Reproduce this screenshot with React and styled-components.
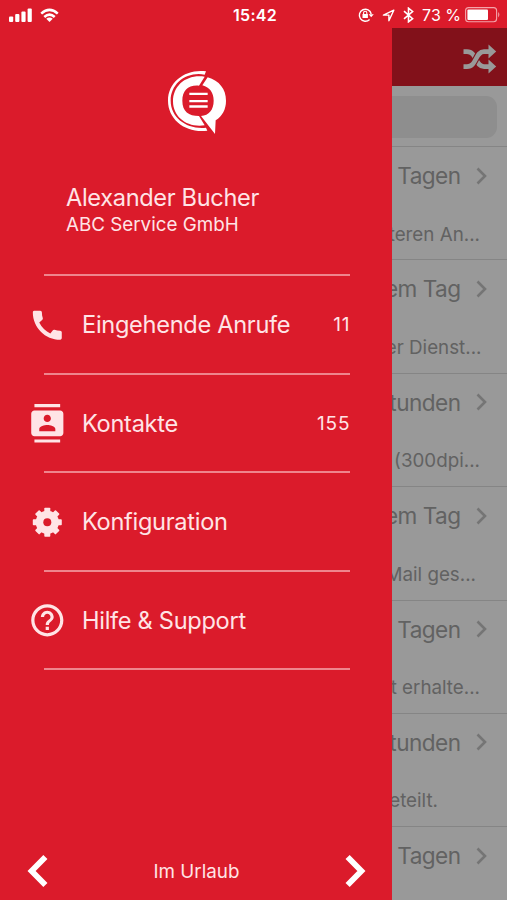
import styled, { createGlobalStyle } from 'styled-components'
import { MdCall, MdContacts, MdHelpOutline } from 'react-icons/md'

const colors = {
   Red: '#db1b2b',
   DarkRed: '#82111a',
   Pink: '#ffe4e6',
   Line: '#ef858d',
   Grey: '#999999',
   GreyLine: '#858585',
   Field: '#8e8e8e',
   GreyText: '#626262',
   Chevron: '#757575',
}

const GlobalStyle = createGlobalStyle`
   * {
      box-sizing: border-box;
   }

   body {
      margin: 0;
      font-family: Inter, 'Liberation Sans', sans-serif;
      background-color: ${colors.Red};
   }
`

const Screen = styled.div`
   width: 507px;
   height: 900px;
   display: flex;
   flex-direction: column;
   overflow: hidden;
   background-color: ${colors.Red};
`

const StatusBar = styled.header`
   height: 28px;
   flex: none;
   display: grid;
   grid-template-columns: 1fr auto 1fr;
   align-items: center;
   padding: 2px 6px 0 9px;
   color: #fff;
`

const StatusGroup = styled.div`
   display: flex;
   align-items: center;
   gap: ${(props) => props.$gap}px;
   justify-self: ${(props) => (props.$end ? 'end' : 'start')};

   svg {
      display: block;
      flex: none;
   }
`

const Clock = styled.span`
   font-size: 16px;
   font-weight: 600;
   letter-spacing: 0.25px;
`

const Percent = styled.span`
   font-size: 16px;
   white-space: nowrap;
   margin-right: -4px;
`

const Body = styled.div`
   flex: 1;
   min-height: 0;
   display: grid;
   grid-template-columns: 392px 1fr;
`

const Drawer = styled.nav`
   display: flex;
   flex-direction: column;
   background-color: ${colors.Red};
   color: ${colors.Pink};
`

const LogoRow = styled.div`
   height: 144px;
   padding: 32px 0 0 150px;
`

const Profile = styled.div`
   height: 102px;
   padding: 11px 0 0 66px;
   display: flex;
   flex-direction: column;
   white-space: nowrap;
`

const Name = styled.span`
   font-size: 23.6px;
   line-height: 30px;
   letter-spacing: -0.34px;
`

const Company = styled.span`
   font-size: 18.8px;
   line-height: 23px;
`

const Menu = styled.ul`
   list-style: none;
   margin: 0;
   padding: 0;
   flex: 1;
`

const Divider = styled.div`
   height: 2px;
   width: 306px;
   margin-left: 44px;
   background-color: ${colors.Line};
`

const MenuItem = styled.li`
   height: 96.6px;
   display: grid;
   grid-template-columns: 39px 1fr auto;
   align-items: center;
   column-gap: 15.5px;
   padding: 1px 42px 0 27.5px;
   font-size: 23.6px;
   letter-spacing: -0.3px;
   white-space: nowrap;

   svg {
      display: block;
   }
`

const Count = styled.span`
   font-size: 19px;
   letter-spacing: 0.9px;
   margin-right: -0.5px;
`

const DrawerFooter = styled.footer`
   height: 60px;
   display: flex;
   align-items: center;
   justify-content: space-between;
   padding: 2px 25px 0 26px;
   font-size: 18.8px;

   svg {
      display: block;
   }
`

const Content = styled.main`
   display: flex;
   flex-direction: column;
   overflow: hidden;
   background-color: ${colors.Grey};
   color: ${colors.GreyText};
`

const Toolbar = styled.div`
   height: 58px;
   flex: none;
   display: flex;
   justify-content: flex-end;
   align-items: center;
   padding: 4px 10px 0 0;
   background-color: ${colors.DarkRed};
`

const SearchBar = styled.div`
   height: 61px;
   flex: none;
   padding: 10px 10px 8px 0;
   border-bottom: 1px solid ${colors.GreyLine};
`

const SearchField = styled.div`
   height: 100%;
   border-radius: 0 11px 11px 0;
   background-color: ${colors.Field};
`

const CallRow = styled.article`
   height: 113.4px;
   flex: none;
   border-bottom: 1px solid ${colors.GreyLine};
   white-space: nowrap;
   overflow: hidden;
`

const CallTime = styled.div`
   height: 57px;
   display: flex;
   align-items: center;
   justify-content: flex-end;
   gap: 15.5px;
   padding-right: 20px;
   font-size: 22.6px;
   letter-spacing: -0.55px;

   svg {
      flex: none;
   }
`

const CallText = styled.div`
   height: 55px;
   display: flex;
   align-items: center;
   justify-content: flex-end;
   padding: 3px ${(props) => props.$end}px 0 0;
   font-size: 18.8px;
   margin-top: 1px;
`

const calls = [
   { time: 'Tagen', text: 'teren An...', end: 27 },
   { time: 'em Tag', text: 'er Dienst...', end: 25.5 },
   { time: 'tunden', text: '(300dpi...', end: 27 },
   { time: 'em Tag', text: 'Mail ges...', end: 31 },
   { time: 'Tagen', text: 't erhalte...', end: 27 },
   { time: 'tunden', text: 'eteilt.', end: 69 },
   { time: 'Tagen', text: '', end: 27 },
]

const menu = [
   { label: 'Eingehende Anrufe', icon: <MdCall size={38.6} />, count: 11 },
   { label: 'Kontakte', icon: <MdContacts size={38.6} />, count: 155 },
   { label: 'Konfiguration', icon: <GearIcon /> },
   { label: 'Hilfe & Support', icon: <MdHelpOutline size={38.6} /> },
]

function SignalIcon() {
   return (
      <svg width="24" height="15" viewBox="0 0 24 15" fill="currentColor">
         <rect x="0" y="8.5" width="4.2" height="5.5" rx="1" />
         <rect x="6.2" y="6" width="4.2" height="8" rx="1" />
         <rect x="12.4" y="3.5" width="4.2" height="10.5" rx="1" />
         <rect x="18.6" y="0.5" width="4.2" height="13.5" rx="1" />
      </svg>
   )
}

function WifiIcon() {
   return (
      <svg width="19" height="14.5" viewBox="0 0 20 15" fill="none" stroke="currentColor" strokeWidth="2.7">
         <path d="M1.3 5.8Q10 -2 18.7 5.8" />
         <path d="M4.5 9.3Q10 4.4 15.5 9.3" />
         <path d="M6.6 11.2Q10 8.4 13.4 11.2L10 14.6Z" fill="currentColor" stroke="none" />
      </svg>
   )
}

function RotationLockIcon() {
   return (
      <svg width="16" height="16" viewBox="0 0 16 16" fill="none" stroke="currentColor" strokeWidth="1.4">
         <path d="M11.6 12.5A6 6 0 1 1 13.2 7" />
         <path d="M10.6 7.2H15.8L13.2 10.3Z" fill="currentColor" stroke="none" />
         <rect x="4.5" y="7" width="5.4" height="4" fill="currentColor" stroke="none" />
         <path d="M5.6 7.2V5.8a1.6 1.6 0 0 1 3.2 0V7.2" strokeWidth="1.1" />
      </svg>
   )
}

function LocationIcon() {
   return (
      <svg width="13" height="13" viewBox="0 0 13 13" fill="none" stroke="currentColor" strokeWidth="1.4">
         <path d="M11.8 1.2L1.4 6.1H6.9V11.7Z" strokeLinejoin="round" />
      </svg>
   )
}

function BluetoothIcon() {
   return (
      <svg width="11" height="16" viewBox="0 0 11 16" fill="none" stroke="currentColor" strokeWidth="1.6">
         <path d="M1 4.2L9.6 11.6L5.5 14.8V1.2L9.6 4.5L1 11.8" />
      </svg>
   )
}

function BatteryIcon() {
   return (
      <svg width="36" height="16" viewBox="0 0 36 16">
         <rect x="0.6" y="0.6" width="31" height="14.2" rx="3" fill="none" stroke="#f4a4aa" strokeWidth="1.1" />
         <rect x="2.4" y="2.4" width="20.6" height="10.6" rx="1" fill="#fff" />
         <path d="M33.2 5Q35.6 7.7 33.2 10.4Z" fill="#f4a4aa" />
      </svg>
   )
}

function Logo() {
   return (
      <svg width="100" height="80" viewBox="0 0 300 240" fill="#fff">
         <path d="M168 34C108 26 54 64 54 122C54 180 108 220 172 212L168 203C112 209 62 174 62 122C62 70 110 34 164 44Z" />
         <path d="M164 50C110 42 69 76 69 124C69 172 112 204 164 196L147 168C116 168 97 154 97 122C97 92 115 74 147 77Z" />
         <path d="M173 52C208 62 228 88 228 122C228 148 217 168 197 181L195 222L153 168C177 166 191 149 191 122C191 99 180 82 157 76Z" />
         <path d="M118 98H173V105H118ZM118 120H173V127H118ZM118 136H173V143H118Z" />
      </svg>
   )
}

function GearIcon() {
   return (
      <svg width="38.6" height="38.6" viewBox="-19.3 -19.3 38.6 38.6" fill="currentColor">
         {[0, 45, 90, 135].map((angle) => (
            <rect key={angle} x="-3" y="-14.5" width="6" height="29" rx="0.8" transform={`rotate(${angle})`} />
         ))}
         <circle r="11.6" />
         <circle r="4" fill={colors.Red} />
      </svg>
   )
}

function ShuffleIcon() {
   return (
      <svg width="34" height="30" viewBox="0 0 34 30">
         <g fill="none" stroke="#999" strokeWidth="4.6">
            <path d="M0.5 7.6H4C14 7.6 12 22.6 21 22.6H27" />
            <path d="M0.5 22.6H4C14 22.6 12 7.6 21 7.6H27" stroke={colors.DarkRed} strokeWidth="6.6" />
            <path d="M0.5 22.6H4C14 22.6 12 7.6 21 7.6H27" />
         </g>
         <path d="M25.5 0.6L33.2 7.6L25.5 14.6ZM25.5 15.6L33.2 22.6L25.5 29.6Z" fill="#999" />
      </svg>
   )
}

function Chevron() {
   return (
      <svg width="11" height="18" viewBox="0 0 11 18" fill="none" stroke={colors.Chevron} strokeWidth="2.6">
         <path d="M1.5 1.5L9 9L1.5 16.5" />
      </svg>
   )
}

function Arrow({ left }) {
   return (
      <svg width="23" height="34" viewBox="0 0 23 34" fill="none" stroke="#fff" strokeWidth="5.8">
         <path d={left ? 'M19.4 3L5.6 17L19.4 31' : 'M3.6 3L17.4 17L3.6 31'} />
      </svg>
   )
}

export default function App() {
   return (
      <Screen>
         <GlobalStyle />
         <StatusBar>
            <StatusGroup $gap={7}>
               <SignalIcon />
               <WifiIcon />
            </StatusGroup>
            <Clock>15:42</Clock>
            <StatusGroup $gap={8} $end>
               <RotationLockIcon />
               <LocationIcon />
               <BluetoothIcon />
               <Percent>73 %</Percent>
               <BatteryIcon />
            </StatusGroup>
         </StatusBar>
         <Body>
            <Drawer>
               <LogoRow>
                  <Logo />
               </LogoRow>
               <Profile>
                  <Name>Alexander Bucher</Name>
                  <Company>ABC Service GmbH</Company>
               </Profile>
               <Divider />
               <Menu>
                  {menu.map((item) => (
                     <div key={item.label}>
                        <MenuItem>
                           {item.icon}
                           <span>{item.label}</span>
                           {item.count && <Count>{item.count}</Count>}
                        </MenuItem>
                        <Divider />
                     </div>
                  ))}
               </Menu>
               <DrawerFooter>
                  <Arrow left />
                  <span>Im Urlaub</span>
                  <Arrow />
               </DrawerFooter>
            </Drawer>
            <Content>
               <Toolbar>
                  <ShuffleIcon />
               </Toolbar>
               <SearchBar>
                  <SearchField />
               </SearchBar>
               {calls.map((call, index) => (
                  <CallRow key={index}>
                     <CallTime>
                        <span>{call.time}</span>
                        <Chevron />
                     </CallTime>
                     <CallText $end={call.end}>{call.text}</CallText>
                  </CallRow>
               ))}
            </Content>
         </Body>
      </Screen>
   )
}
